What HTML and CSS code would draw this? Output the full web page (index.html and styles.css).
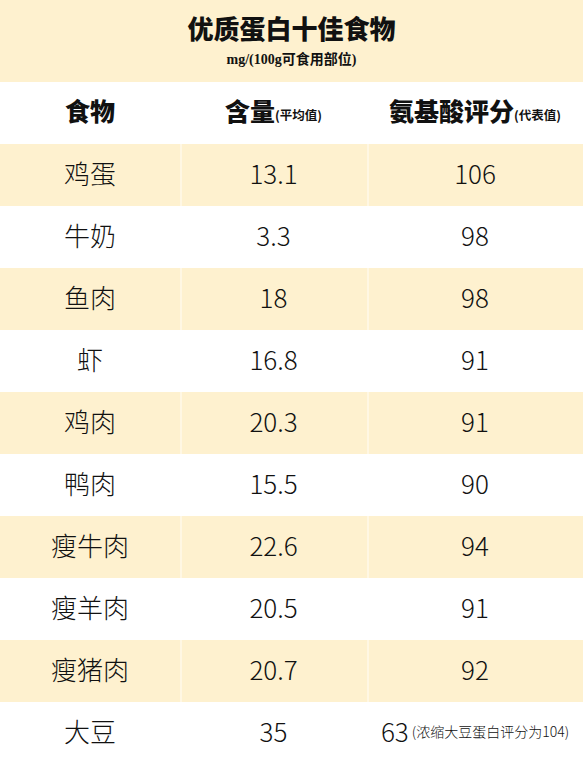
FILE: index.html
```html
<!DOCTYPE html>
<html lang="zh-CN">
<head>
<meta charset="utf-8">
<link rel="stylesheet" href="styles.css">
</head>
<body>
<div class="page">
  <header class="title-band">
    <h1 class="title">优质蛋白十佳食物</h1>
    <div class="subtitle">mg/(100g可食用部位)</div>
  </header>
  <div class="table">
    <div class="row head">
      <div class="cell">食物</div>
      <div class="cell">含量<span class="note">(平均值)</span></div>
      <div class="cell">氨基酸评分<span class="note">(代表值)</span></div>
    </div>
    <div class="row alt"><div class="cell">鸡蛋</div><div class="cell">13.1</div><div class="cell">106</div></div>
    <div class="row"><div class="cell">牛奶</div><div class="cell">3.3</div><div class="cell">98</div></div>
    <div class="row alt"><div class="cell">鱼肉</div><div class="cell">18</div><div class="cell">98</div></div>
    <div class="row"><div class="cell">虾</div><div class="cell">16.8</div><div class="cell">91</div></div>
    <div class="row alt"><div class="cell">鸡肉</div><div class="cell">20.3</div><div class="cell">91</div></div>
    <div class="row"><div class="cell">鸭肉</div><div class="cell">15.5</div><div class="cell">90</div></div>
    <div class="row alt"><div class="cell">瘦牛肉</div><div class="cell">22.6</div><div class="cell">94</div></div>
    <div class="row"><div class="cell">瘦羊肉</div><div class="cell">20.5</div><div class="cell">91</div></div>
    <div class="row alt"><div class="cell">瘦猪肉</div><div class="cell">20.7</div><div class="cell">92</div></div>
    <div class="row"><div class="cell">大豆</div><div class="cell">35</div><div class="cell">63<span class="remark">(浓缩大豆蛋白评分为104)</span></div></div>
  </div>
</div>
</body>
</html>
```

FILE: styles.css
```css
html, body {
  margin: 0;
  padding: 0;
  background: #ffffff;
}
body {
  font-family: "Noto Sans CJK SC", "Noto Sans", sans-serif;
  color: #111111;
  width: 583px;
  height: 758px;
  overflow: hidden;
}
.page {
  width: 583px;
}
.title-band {
  background: #fef1cf;
  height: 82px;
  box-sizing: border-box;
  display: flex;
  flex-direction: column;
  align-items: center;
  padding-top: 10px;
}
.title {
  margin: 0;
  font-size: 26px;
  font-weight: 900;
  line-height: 36px;
  letter-spacing: 0;
}
.subtitle {
  font-size: 14px;
  font-weight: 700;
  line-height: 20px;
  margin-top: 4px;
  font-family: "Liberation Serif", "Noto Sans CJK SC", serif;
}
.table {
  display: flex;
  flex-direction: column;
}
.row {
  display: grid;
  grid-template-columns: 180px 187px 216px;
  height: 62px;
  align-items: center;
  font-size: 26px;
  font-weight: 300;
}
.row.alt {
  background: #fef1cf;
}
.row.alt .cell + .cell {
  box-shadow: inset 2px 0 0 #fff7e3;
}
.cell {
  height: 100%;
  box-sizing: border-box;
  padding-bottom: 6px;
  display: flex;
  align-items: center;
  justify-content: center;
  white-space: nowrap;
}
.head {
  font-size: 25px;
  font-weight: 900;
}
.note {
  font-size: 12.5px;
  font-weight: 700;
  margin-top: 9px;
}
.remark {
  font-size: 14px;
  font-weight: 300;
  margin-left: 3px;
  margin-top: 2px;
}
```
